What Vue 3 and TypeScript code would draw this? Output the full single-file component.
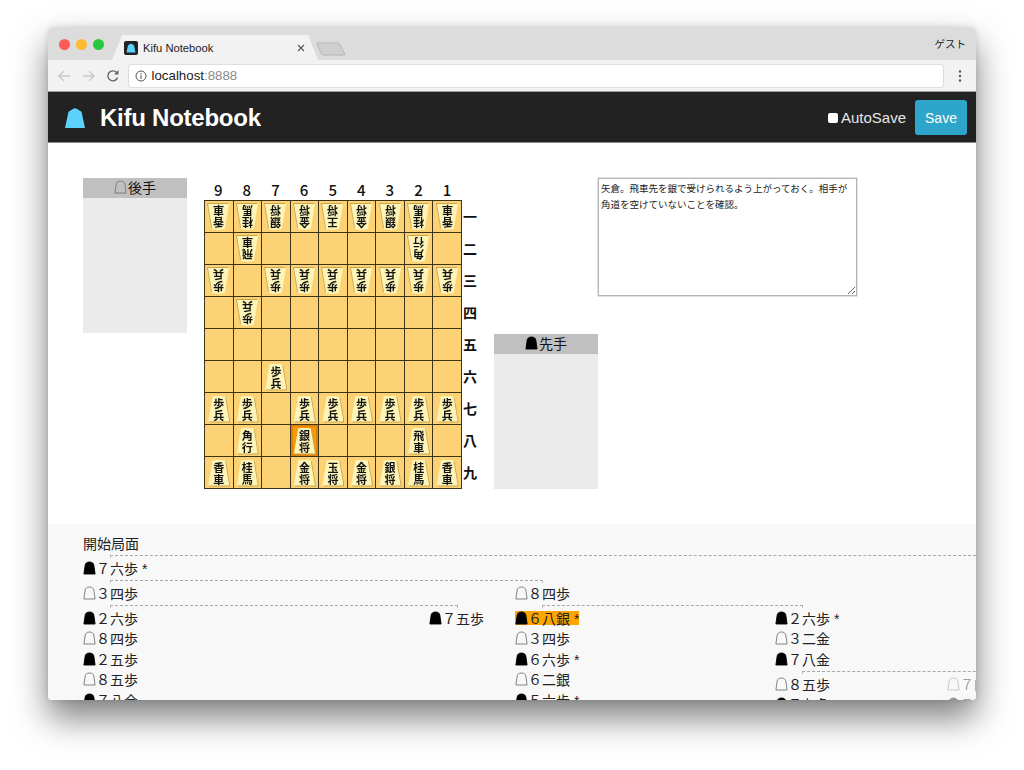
<script setup lang="ts">
import { h } from 'vue'

interface Cell { k: string; side: 'b' | 'w' | ''; sel: boolean }
interface Move { s: 'b' | 'w'; m: string; on?: boolean }

const Mark = (props: { s: string }) =>
  h('svg', { viewBox: '0 0 13 14', width: 13, height: 14 }, [
    h('path', {
      d: 'M6.500 1C9 1 10.500 2.300 10.800 4L12.100 13H.9L2.200 4C2.500 2.300 4 1 6.500 1Z',
      fill: props.s === 'b' ? '#000' : 'none',
      stroke: props.s === 'b' ? '#000' : '#777',
      'stroke-width': 0.9
    })
  ])
Mark.props = ['s']

const names: Record<string, string> = {
  P: '歩兵', L: '香車', N: '桂馬', S: '銀将', G: '金将', K: '玉将', R: '飛車', B: '角行',
  k: '王将', p: '歩兵', l: '香車', n: '桂馬', s: '銀将', g: '金将', r: '飛車', b: '角行'
}
const layout = [
  'lnsgkgsnl',
  '.r.....b.',
  'p.ppppppp',
  '.p.......',
  '.........',
  '..P......',
  'PP.PPPPPP',
  '.B.S...R.',
  'LN.GKGSNL'
]
const cells: Cell[] = []
layout.forEach((row, r) => {
  row.split('').forEach((c, i) => {
    const side = c === '.' ? '' : c === c.toUpperCase() ? 'b' : 'w'
    cells.push({ k: c === '.' ? '' : names[c], side, sel: r === 7 && i === 3 })
  })
})
const files = ['9', '8', '7', '6', '5', '4', '3', '2', '1']
const ranks = ['一', '二', '三', '四', '五', '六', '七', '八', '九']
const comment = '矢倉。飛車先を銀で受けられるよう上がっておく。相手が角道を空けていないことを確認。'

const mainLine: Move[] = [{ s: 'b', m: '２六歩' }, { s: 'w', m: '８四歩' }, { s: 'b', m: '２五歩' }, { s: 'w', m: '８五歩' }, { s: 'b', m: '７八金' }]
const centerLine: Move[] = [{ s: 'b', m: '６八銀 *', on: true }, { s: 'w', m: '３四歩' }, { s: 'b', m: '６六歩 *' }, { s: 'w', m: '６二銀' }, { s: 'b', m: '５六歩 *' }]
const sideLine: Move[] = [{ s: 'b', m: '２六歩 *' }, { s: 'w', m: '３二金' }, { s: 'b', m: '７八金' }]
const tailLine: Move[] = [{ s: 'w', m: '８五歩' }, { s: 'b', m: '７七角 *' }]
const dimLine: Move[] = [{ s: 'w', m: '７四歩' }, { s: 'b', m: '７七角' }]
</script>

<template>
  <div class="desk">
    <div class="window">
      <div class="tabbar">
        <div class="lights"><i class="red"></i><i class="amber"></i><i class="green"></i></div>
        <div class="tab">
          <svg class="favicon" viewBox="0 0 14 14"><rect width="14" height="14" rx="2" fill="#222" /><path d="M7 2.500 10 4.300 11.500 11.500H2.500L4 4.300Z" fill="#5bd1fb" /></svg>
          <span class="tabtitle">Kifu Notebook</span>
          <svg class="tabclose" viewBox="0 0 8 8"><path d="M1 1 7 7M7 1 1 7" stroke="#555" stroke-width="1.1" /></svg>
        </div>
        <svg class="newtab" viewBox="0 0 30 14"><path d="M1 1H21Q23 1 24 3L29 12Q29 13 28 13H8Q6 13 5 11L1 2Z" fill="#cfcfcf" stroke="#b5b5b5" /></svg>
        <span class="guest">ゲスト</span>
      </div>
      <div class="toolbar">
        <svg class="navicon" viewBox="0 0 14 14"><path d="M13 7H2M7 2 2 7 7 12" fill="none" stroke="#c9c9c9" stroke-width="1.4" /></svg>
        <svg class="navicon" viewBox="0 0 14 14"><path d="M1 7H12M7 2 12 7 7 12" fill="none" stroke="#c9c9c9" stroke-width="1.4" /></svg>
        <svg class="navicon" viewBox="0 0 14 14"><path d="M11.600 8.500A5 5 0 1 1 10.600 3.500" fill="none" stroke="#666" stroke-width="1.4" /><path d="M12.500 1V5.600H8Z" fill="#666" /></svg>
        <div class="omnibox">
          <svg class="info" viewBox="0 0 12 12"><circle cx="6" cy="6" r="5" fill="none" stroke="#555" /><path d="M6 5.200V9M6 3V4.200" stroke="#555" stroke-width="1.1" /></svg>
          <span class="host">localhost</span><span class="port">:8888</span>
        </div>
        <svg class="kebab" viewBox="0 0 4 14"><circle cx="2" cy="2.500" r="1.200" /><circle cx="2" cy="7" r="1.200" /><circle cx="2" cy="11.500" r="1.200" /></svg>
      </div>
      <header class="appbar">
        <svg class="logo" viewBox="0 0 20 20"><path d="M10 .2Q10.700 .2 11.200 .6L15.800 3.200Q16.500 3.600 16.700 4.400L20 20H0L3.300 4.400Q3.500 3.600 4.200 3.200L8.800 .6Q9.300 .2 10 .2Z" fill="#5bd1fb" /></svg>
        <h1>Kifu Notebook</h1>
        <label class="autosave"><input type="checkbox" class="check" />AutoSave</label>
        <button class="save">Save</button>
      </header>

      <main class="main">
        <section class="stand gote">
          <div class="standhead"><Mark s="w" class="hmk" />後手</div>
          <div class="standbody"></div>
        </section>
        <section class="boardwrap">
          <div class="files"><span v-for="f in files" :key="f">{{ f }}</span></div>
          <div class="boardrow">
            <div class="board">
              <div v-for="(c, i) in cells" :key="i" class="cell" :class="{ sel: c.sel }">
                <div v-if="c.k" class="piece" :class="c.side"><span class="face">{{ c.k }}</span></div>
              </div>
            </div>
            <div class="ranks"><span v-for="r in ranks" :key="r">{{ r }}</span></div>
          </div>
        </section>
        <section class="stand sente">
          <div class="standhead"><Mark s="b" class="hmk" />先手</div>
          <div class="standbody"></div>
        </section>
        <textarea class="comment" readonly :value="comment"></textarea>
      </main>

      <section class="tree">
        <div class="move">開始局面</div>
        <div class="branch open"></div>
        <div class="move"><Mark s="b" />７六歩 *</div>
        <div class="branch w1"></div>
        <div class="fork">
          <div class="left">
            <div class="move"><Mark s="w" />３四歩</div>
            <div class="branch w2"></div>
            <div class="fork">
              <div class="c1">
                <div v-for="x in mainLine" :key="x.m" class="move"><Mark :s="x.s" />{{ x.m }}</div>
              </div>
              <div class="c2"><div class="move"><Mark s="b" />７五歩</div></div>
            </div>
          </div>
          <div class="right">
            <div class="move"><Mark s="w" />８四歩</div>
            <div class="branch w3"></div>
            <div class="fork">
              <div class="c3">
                <div v-for="x in centerLine" :key="x.m" class="move"><span class="entry" :class="{ current: x.on }"><Mark :s="x.s" />{{ x.m }}</span></div>
              </div>
              <div class="c4">
                <div v-for="x in sideLine" :key="x.m" class="move"><Mark :s="x.s" />{{ x.m }}</div>
                <div class="branch open"></div>
                <div class="fork">
                  <div class="c5">
                    <div v-for="x in tailLine" :key="x.m" class="move"><Mark :s="x.s" />{{ x.m }}</div>
                  </div>
                  <div class="c6">
                    <div v-for="x in dimLine" :key="x.m" class="move"><Mark :s="x.s" />{{ x.m }}</div>
                  </div>
                </div>
              </div>
            </div>
          </div>
        </div>
      </section>
    </div>
  </div>
</template>

<style>
html, body { margin: 0; background: #fff; }
</style>

<style scoped>
.desk {
  height: 770px;
  padding: 27px 0 0 48px;
  box-sizing: border-box;
  overflow: hidden;
}
.window {
  width: 928px;
  height: 673px;
  display: flex;
  flex-direction: column;
  overflow: hidden;
  border-radius: 5px 5px 4px 4px;
  box-shadow: 0 18px 34px rgba(0, 0, 0, .5), 0 0 6px rgba(0, 0, 0, .12);
  background: #fff;
  font-family: "Liberation Sans", "Noto Sans CJK JP", sans-serif;
  color: #222;
}
.tabbar {
  height: 33px;
  flex: none;
  display: flex;
  align-items: flex-end;
  background: #dcdcdc;
  padding: 0 10px 0 11px;
  box-sizing: border-box;
}
.lights { display: flex; gap: 6px; align-self: center; margin-right: 8px; margin-top: 1px; }
.lights i { width: 11px; height: 11px; border-radius: 50%; display: block; }
.red { background: #fc5b57; }
.amber { background: #fdbb2f; }
.green { background: #27c83f; }
.tab {
  width: 206px;
  height: 25px;
  background: #f2f2f2;
  display: flex;
  align-items: center;
  padding: 0 13px 0 12px;
  box-sizing: border-box;
  clip-path: polygon(0 100%, 10px 0, 196px 0, 100% 100%);
}
.favicon { width: 14px; height: 14px; flex: none; margin-right: 5px; }
.tabtitle { font-size: 11.200px; color: #222; flex: 1; }
.tabclose { width: 8px; height: 8px; flex: none; }
.newtab { width: 30px; height: 14px; margin: 0 0 4px -2px; flex: none; }
.guest { margin-left: auto; align-self: center; font-size: 10.500px; color: #222; margin-top: -1px; }
.toolbar {
  height: 32px;
  flex: none;
  display: flex;
  align-items: center;
  background: #f2f2f2;
  border-bottom: 1px solid #9d9d9d;
  box-sizing: border-box;
  padding: 0 14px 0 9px;
}
.navicon { width: 14px; height: 14px; flex: none; margin-right: 10.500px; }
.omnibox {
  width: 816px;
  height: 24px;
  margin: 0 auto 0 -3px;
  background: #fff;
  border: 1px solid #dedede;
  border-radius: 3px;
  box-sizing: border-box;
  display: flex;
  align-items: center;
  padding-left: 6px;
  font-size: 13.300px;
}
.info { width: 12px; height: 12px; margin-right: 5px; flex: none; }
.host { color: #222; }
.port { color: #8a8a8a; }
.kebab { width: 4px; height: 14px; fill: #555; flex: none; }
.appbar {
  height: 51px;
  flex: none;
  display: flex;
  align-items: center;
  background: #222;
  border-bottom: 1px solid #888;
  box-sizing: border-box;
  padding: 1px 9px 0 17px;
  color: #fff;
}
.logo { width: 20px; height: 20px; flex: none; margin-right: 15px; }
h1 { margin: 0; font-size: 24px; font-weight: 700; letter-spacing: -.25px; color: #fff; }
.autosave { margin-left: auto; display: flex; align-items: center; font-size: 15px; color: #e6e6e6; margin-right: 9px; }
.check { width: 10px; height: 10px; margin: 1px 3px 0 0; appearance: none; background: #fff; border-radius: 2px; }
.save {
  width: 52px;
  height: 35px;
  background: #2ea6cb;
  border: none;
  border-radius: 3px;
  color: #fff;
  font: 14px "Liberation Sans", sans-serif;
  padding: 0;
}
.main {
  height: 381px;
  flex: none;
  display: flex;
  align-items: flex-start;
  padding: 35px 0 0 35px;
  box-sizing: border-box;
}
.stand { width: 104px; height: 155px; flex: none; display: flex; flex-direction: column; }
.gote { margin-right: 17px; }
.sente { margin: 156px 0 0 17px; }
.standhead {
  height: 20px;
  background: #c0c0c0;
  display: flex;
  align-items: center;
  justify-content: center;
  font-size: 14px;
  color: #111;
  padding-bottom: 1.500px;
  box-sizing: border-box;
}
.hmk { margin-right: 1px; }
.standbody { flex: 1; background: #ebebeb; }
.boardwrap { width: 273px; flex: none; }
.files {
  display: grid;
  grid-template-columns: repeat(9, 28.600px);
  height: 22px;
  font: 500 15px/23px "Noto Sans CJK JP", sans-serif;
  text-align: center;
  color: #111;
}
.boardrow { display: flex; }
.board {
  width: 258px;
  height: 289px;
  flex: none;
  display: grid;
  grid-template-columns: repeat(9, 1fr);
  grid-template-rows: repeat(9, 1fr);
  background: #fdd274;
  border-top: 1px solid #3d3418;
  border-left: 1px solid #3d3418;
  box-sizing: border-box;
}
.cell {
  border-right: 1px solid #3d3418;
  border-bottom: 1px solid #3d3418;
  display: flex;
  align-items: center;
  justify-content: center;
  min-width: 0;
}
.cell.sel { background: #f59a0e; box-shadow: inset 0 0 0 2px #e08405; }
.piece { width: 21px; height: 26px; filter: drop-shadow(1px 1px 0 #c7a451); }
.piece.w { transform: rotate(180deg); }
.face {
  display: block;
  width: 100%;
  height: 100%;
  background: #fdf4b8;
  clip-path: polygon(20% 4%, 50% 0, 80% 4%, 100% 100%, 0 100%);
  color: #111;
  font: 700 11px/12px "Noto Sans CJK JP", sans-serif;
  text-align: center;
  padding: 1px 5px 0;
  box-sizing: border-box;
}
.ranks {
  display: grid;
  grid-template-rows: repeat(9, 32px);
  font: 700 14px/32px "Noto Sans CJK JP", sans-serif;
  color: #111;
  padding: 0 0 0 1px;
  text-align: center;
  width: 14px;
}
.comment {
  width: 259px;
  height: 118px;
  flex: none;
  margin: 0;
  border: 1px solid #b5b5b5;
  box-shadow: 0 0 0 .5px #c8c8c8;
  border-radius: 0;
  box-sizing: border-box;
  padding: 2px;
  font: 9.500px/16px "Liberation Sans", "Noto Sans CJK JP", sans-serif;
  color: #222;
  outline: none;
  background: #fff;
}
.tree {
  flex: 1;
  min-height: 0;
  overflow: hidden;
  background: #f8f8f8;
  padding: 9px 0 0 35px;
  font-size: 14px;
}
.move {
  height: 20.600px;
  display: flex;
  align-items: center;
  white-space: pre;
  color: #222;
  padding-bottom: 1.500px;
  box-sizing: border-box;
}
.entry { display: inline-flex; align-items: center; height: 14px; }
.current { background: #ffa500; }
.branch {
  margin: 1px 0 0 27px;
  height: 2.400px;
  border-top: 1px dashed #a8a8a8;
  border-left: 1px solid #bbb;
  border-right: 1px solid #bbb;
  box-sizing: content-box;
}
.branch.open { border-right: none; margin-right: -50px; }
.w1 { width: 431px; }
.w2 { width: 346px; }
.w3 { width: 259px; }
.fork { display: flex; }
.left { width: 432px; flex: none; }
.right { flex: 1; min-width: 0; }
.c1 { width: 346px; flex: none; }
.c2 { width: 86px; flex: none; }
.c3 { width: 260px; flex: none; }
.c4 { flex: 1; min-width: 0; }
.c5 { width: 172px; flex: none; }
.c6 { flex: none; width: 60px; opacity: .4; }
</style>
